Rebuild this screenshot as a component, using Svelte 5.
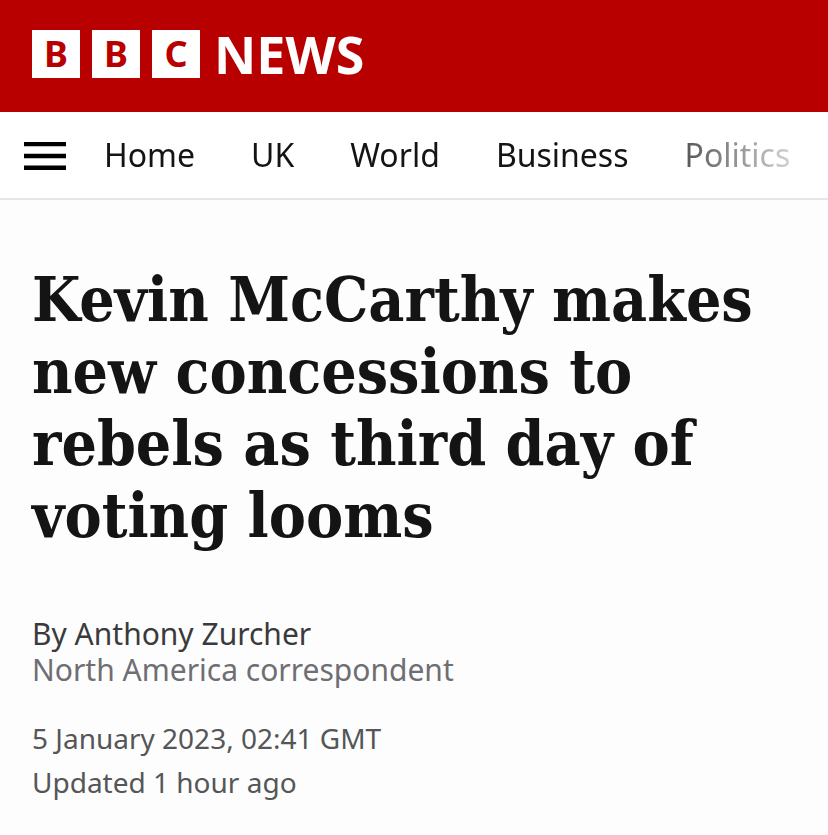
<script>
    const sections = ['Home', 'UK', 'World', 'Business', 'Politics'];
    const blocks = ['B', 'B', 'C'];

    let menuOpen = false;
</script>

<div class="page">
    <header class="masthead">
        <a class="logo" href="/news" aria-label="BBC News">
            <span class="blocks">
                {#each blocks as letter}
                    <span class="block">{letter}</span>
                {/each}
            </span>
            <span class="news">NEWS</span>
        </a>
    </header>

    <nav class="navigation">
        <button class="menu" aria-label="Menu" aria-expanded={menuOpen} on:click={() => (menuOpen = !menuOpen)}>
            <svg width="42" height="30" viewBox="0 0 42 30" aria-hidden="true">
                <path d="M0 2h42v4.3H0zM0 13.7h42v4.6H0zM0 25.4h42V30H0z" fill="#000" />
            </svg>
        </button>
        <ul class="sections">
            {#each sections as section}
                <li><a href={`/news/${section.toLowerCase()}`}>{section}</a></li>
            {/each}
        </ul>
    </nav>

    <main class="article">
        <h1>Kevin McCarthy makes new concessions to rebels as third day of voting looms</h1>
        <div class="byline">
            <div class="author">By Anthony Zurcher</div>
            <div class="role">North America correspondent</div>
        </div>
        <div class="dates">
            <time datetime="2023-01-05T02:41Z">5 January 2023, 02:41 GMT</time>
            <div>Updated 1 hour ago</div>
        </div>
    </main>
</div>

<style>
    :global(body) {
        margin: 0;
        background: #fdfdfd;
    }

    .page {
        font-family: "Noto Sans", "Open Sans", sans-serif;
        color: #141414;
    }

    .masthead {
        padding: 30px 32px 34px;
        background: #b80000;
    }

    .logo {
        display: flex;
        align-items: center;
        gap: 14px;
        width: fit-content;
        color: #fff;
        font-weight: 700;
        text-decoration: none;
    }

    .blocks {
        display: flex;
        gap: 12px;
    }

    .block {
        width: 48px;
        height: 48px;
        background: #fff;
        color: #b80000;
        font-size: 36px;
        line-height: 48px;
        text-align: center;
    }

    .news {
        font-size: 52px;
        line-height: 48px;
    }

    .navigation {
        display: flex;
        align-items: center;
        height: 86px;
        padding-left: 24px;
        background: #fff;
        border-bottom: 2px solid #e6e6e6;
    }

    .menu {
        flex: none;
        padding: 0;
        border: 0;
        background: none;
        cursor: pointer;
    }

    .menu svg {
        display: block;
    }

    /* The list fades out where it runs off the screen */
    .sections {
        display: flex;
        flex: 1;
        gap: 56px;
        min-width: 0;
        margin: 0;
        padding: 0 0 0 38px;
        overflow: hidden;
        list-style: none;
        mask-image: linear-gradient(to left, transparent, #000 200px);
    }

    .sections a {
        color: #141414;
        font-size: 32px;
        line-height: 48px;
        text-decoration: none;
    }

    .article {
        padding: 64px 32px 32px;
    }

    h1 {
        margin: 0 0 64px;
        font-family: "DejaVu Serif Condensed", "DejaVu Serif", serif;
        font-size: 62px;
        font-weight: 700;
        line-height: 72px;
    }

    .byline {
        margin-bottom: 28px;
        font-size: 30px;
        line-height: 36px;
    }

    .author {
        color: #3a3a3c;
    }

    .role {
        color: #6e6e73;
    }

    .dates {
        color: #545658;
        font-size: 28px;
        line-height: 44px;
    }

    .dates time {
        display: block;
    }
</style>
